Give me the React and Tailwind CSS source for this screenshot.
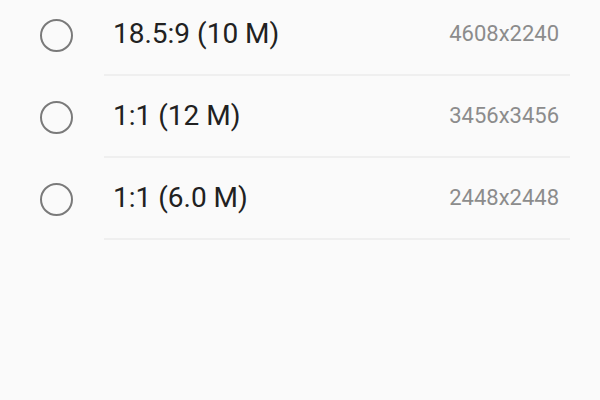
import React from 'react';

const sizes = [
  { label: '18.5:9 (10 M)', res: '4608x2240' },
  { label: '1:1 (12 M)', res: '3456x3456' },
  { label: '1:1 (6.0 M)', res: '2448x2448' },
];

const App = () => (
  <div className="h-[400px] w-[600px] overflow-hidden bg-[#fafafa]" style={{ fontFamily: 'Roboto, "Noto Sans", sans-serif' }}>
    <ul className="-mt-[6px]">
      {sizes.map((s) => (
        <li key={s.res} className="flex items-stretch">
          <div className="flex w-[104px] items-center pl-[40px]">
            <span className="h-[33px] w-[33px] rounded-full border-2 border-[#7a7a7a]" />
          </div>
          <div className="mr-[30px] flex h-[82px] flex-1 items-center justify-between border-b-2 border-[#efefef] pl-[9px] pr-[11px]">
            <span className="text-[28px] leading-none text-[#212121]">{s.label}</span>
            <span className="text-[22px] leading-none text-[#8c8c8c]">{s.res}</span>
          </div>
        </li>
      ))}
    </ul>
  </div>
);

export default App;
